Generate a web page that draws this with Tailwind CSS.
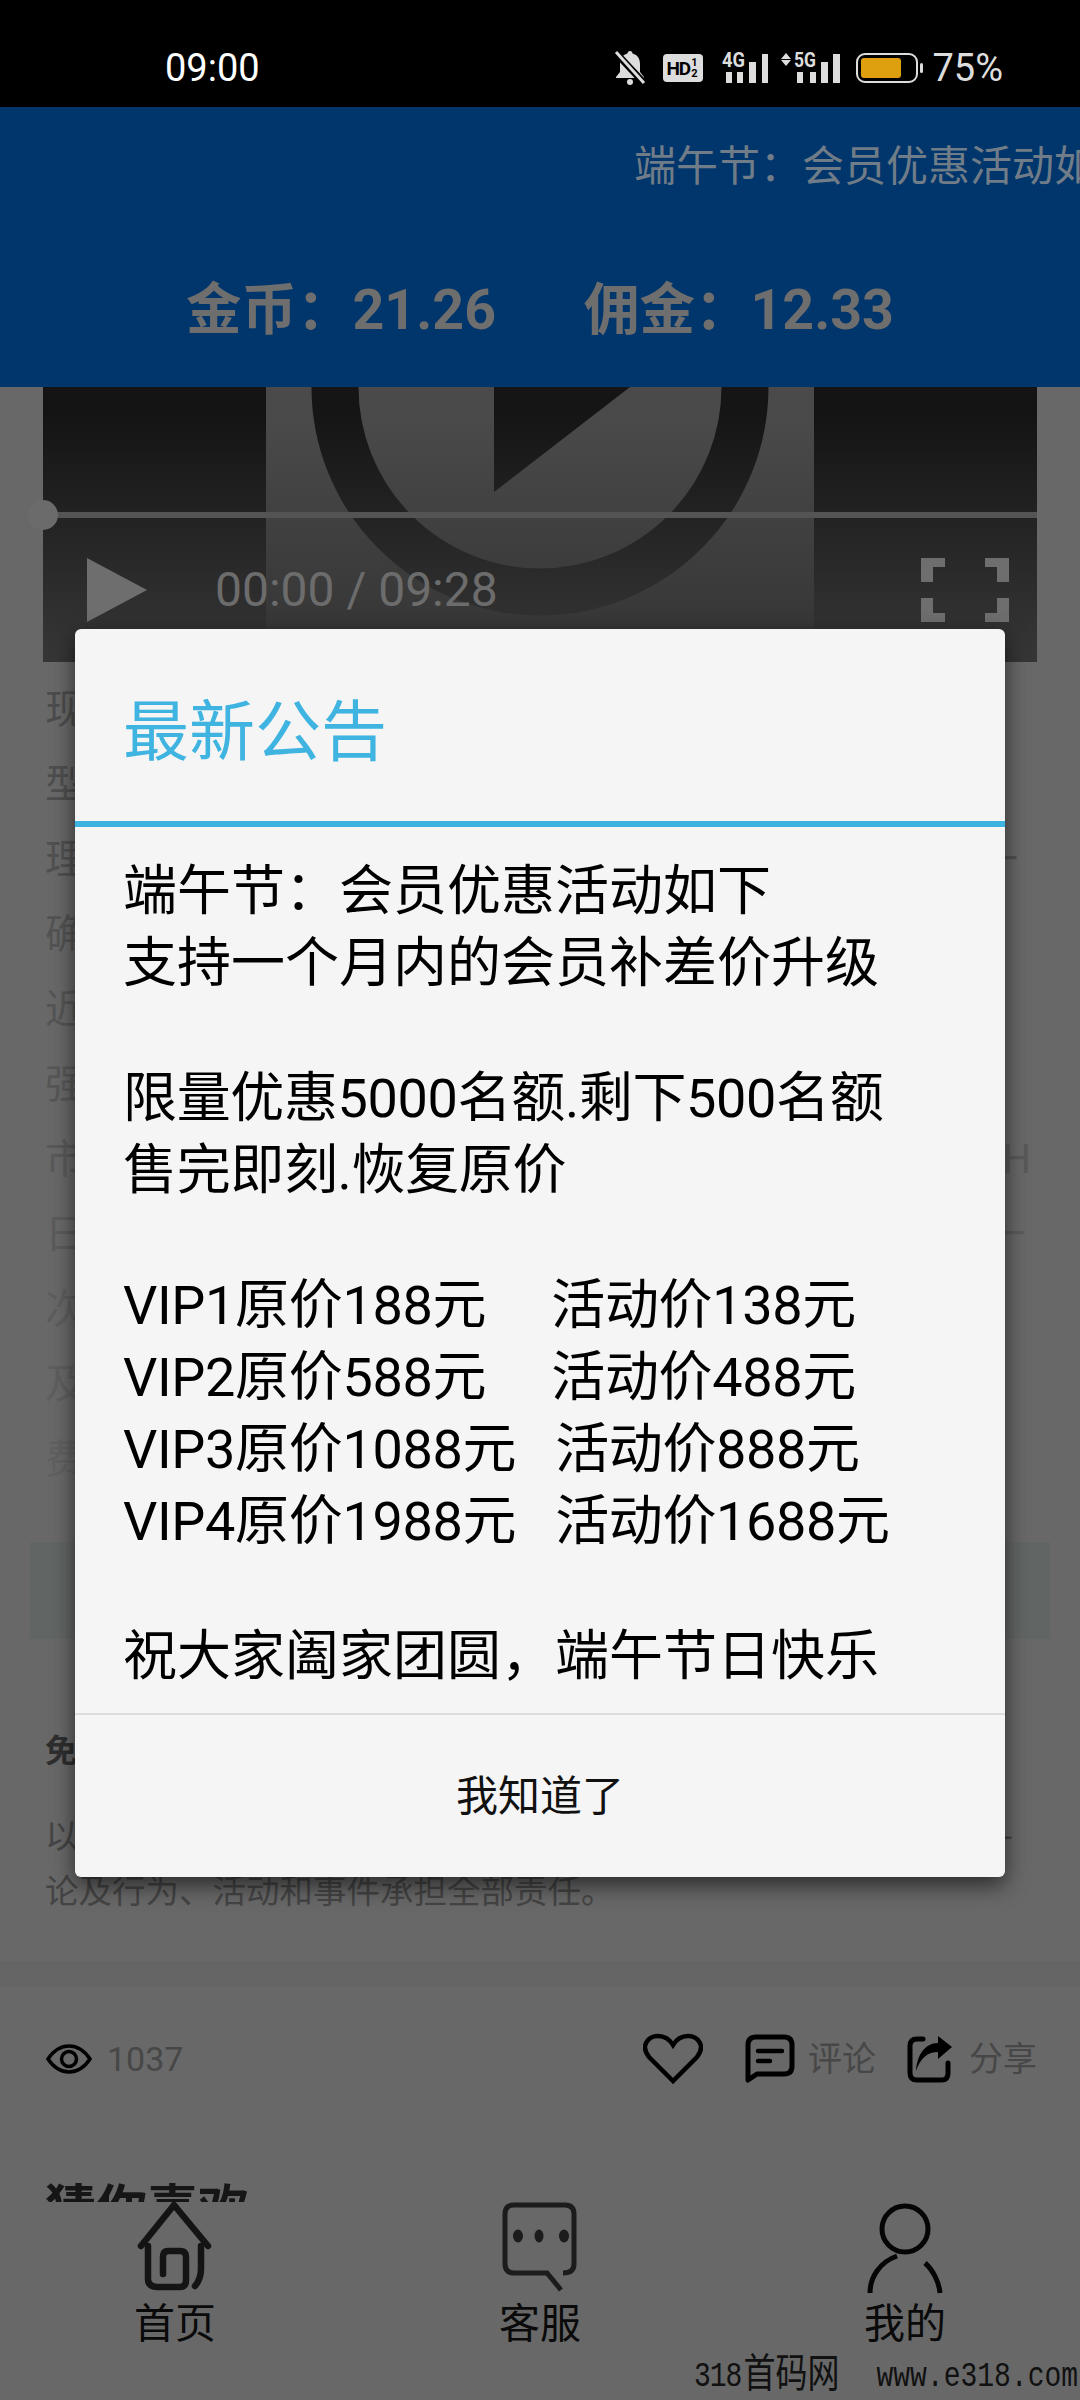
<!DOCTYPE html>
<html lang="zh-CN">
  <head>
    <meta charset="UTF-8" />
    <meta name="viewport" content="width=device-width, initial-scale=1.0" />
    <title>最新公告</title>
    <script src="https://cdn.jsdelivr.net/npm/@tailwindcss/browser@4"></script>
  </head>
  <body class="bg-black">
    <div class="relative flex flex-col w-[1080px] h-[2400px] overflow-hidden bg-[#686868] font-['Roboto','Noto_Sans_CJK_SC',sans-serif]">
      <!-- status bar -->
      <div class="flex items-center h-[107px] shrink-0 bg-black pl-[165px] pr-[77px] pt-[29px]">
        <span class="text-[38px] leading-none text-white">09:00</span>
        <div class="ml-auto flex items-center text-[#dddddd]">
          <svg class="w-[32px] h-[36px]" viewBox="0 0 32 36">
            <path d="M16 1c-1.500 0-2.500 1-2.500 2.500C8 5 6 9 6 14v8l-4 5v1h28v-1l-4-5v-8c0-5-2-9-7.500-10.500C18.500 2 17.500 1 16 1z" fill="#dddddd" />
            <circle cx="16" cy="32" r="3" fill="#dddddd" />
            <path d="M1 2l30 32" stroke="#000000" stroke-width="7" />
            <path d="M2 2l28 31" stroke="#dddddd" stroke-width="3" />
          </svg>
          <div class="ml-[17px] flex items-center h-[28px] w-[40px] rounded-[4px] bg-[#dddddd] pl-[3px] text-black font-bold">
            <span class="text-[19px] leading-none tracking-[-1px]">HD</span>
            <span class="flex flex-col items-center ml-[1px] text-[11px] leading-[11px]"><span>1</span><span>2</span></span>
          </div>
          <svg class="ml-[19px] w-[46px] h-[32px]" viewBox="0 0 46 32">
            <text x="0" y="15" font-size="20" font-weight="700" fill="#dddddd" textLength="23" lengthAdjust="spacingAndGlyphs">4G</text>
            <rect x="4" y="20" width="6" height="11" fill="#dddddd" />
            <rect x="15" y="20" width="6" height="11" fill="#dddddd" />
            <rect x="27" y="10" width="7" height="21" fill="#dddddd" />
            <rect x="40" y="2" width="6" height="29" fill="#dddddd" />
          </svg>
          <svg class="ml-[13px] w-[59px] h-[32px]" viewBox="0 0 59 32">
            <path d="M5 1l5 6H0zM5 14l5-6H0z" fill="#dddddd" />
            <text x="13" y="15" font-size="20" font-weight="700" fill="#dddddd" textLength="22" lengthAdjust="spacingAndGlyphs">5G</text>
            <rect x="16" y="20" width="6" height="11" fill="#dddddd" />
            <rect x="29" y="20" width="6" height="11" fill="#dddddd" />
            <rect x="40" y="10" width="7" height="21" fill="#dddddd" />
            <rect x="52" y="2" width="7" height="29" fill="#dddddd" />
          </svg>
          <svg class="ml-[16px] w-[68px] h-[30px]" viewBox="0 0 68 30">
            <rect x="1" y="1" width="60" height="28" rx="8" fill="none" stroke="#dddddd" stroke-width="2" />
            <rect x="5" y="5" width="40" height="20" rx="3" fill="#dfa00f" />
            <rect x="64" y="10" width="3" height="10" rx="1.500" fill="#dddddd" />
          </svg>
          <span class="ml-[8px] text-[38px] leading-none">75%</span>
        </div>
      </div>

      <!-- blue header -->
      <div class="h-[280px] shrink-0 bg-[#00366b] overflow-hidden">
        <div class="pl-[634px] pt-[33px] h-[113px] text-[42px] leading-[54px] text-[#707c87] whitespace-nowrap">端午节：会员优惠活动如下</div>
        <div class="flex justify-center gap-[88px] pt-[51px] text-[55.500px] leading-[80px] font-bold text-[#6e6e6e]">
          <span>金币：21.26</span>
          <span>佣金：12.33</span>
        </div>
      </div>

      <!-- page behind the dialog -->
      <div class="h-[1815px] shrink-0 overflow-hidden">
        <div class="relative mx-[43px] h-[275px] bg-[#141414]">
          <svg class="absolute inset-0 w-full h-full" viewBox="0 0 994 275">
            <rect x="223" y="0" width="548" height="275" fill="#4a4a4a" />
            <circle cx="497" cy="0" r="205" fill="none" stroke="#151515" stroke-width="47" />
            <path d="M451 -105L587 0L451 105z" fill="#151515" />
          </svg>
          <div class="absolute inset-0 bg-linear-to-b from-transparent from-[10%] to-[#353535] to-[95%]"></div>
          <div class="absolute left-0 right-0 top-[125px] h-[6px] bg-[#545454]"></div>
          <div class="absolute left-[-15px] top-[113px] w-[30px] h-[30px] rounded-full bg-[#6b6b6b]"></div>
          <div class="absolute left-0 right-0 top-[171px] flex items-center h-[64px] pl-[44px] pr-[28px]">
            <svg class="w-[60px] h-[64px]" viewBox="0 0 60 64"><path d="M0 0L60 32L0 64z" fill="#6e6e6e" /></svg>
            <span class="ml-[68px] text-[48px] leading-none text-[#6c6c6c]">00:00 / 09:28</span>
            <svg class="ml-auto w-[88px] h-[64px]" viewBox="0 0 88 64">
              <path d="M0 0H24V9H12V24H0zM88 0H64V9H76V24H88zM0 64H24V55H12V40H0zM88 64H64V55H76V40H88z" fill="#6e6e6e" />
            </svg>
          </div>
        </div>

        <div class="mt-[10px] pl-[45px] text-[40px] leading-[75px]">
          <div class="text-[#4c4c4c]">现</div>
          <div class="text-[#4e4e4e]">型</div>
          <div class="flex justify-between pr-[62px] text-[#505050]"><span>理</span><span>一</span></div>
          <div class="text-[#535353]">确</div>
          <div class="text-[#555555]">近</div>
          <div class="text-[#575757]">强</div>
          <div class="flex justify-between pr-[49px] text-[#595959]"><span>市</span><span>H</span></div>
          <div class="flex justify-between pr-[54px] text-[#5b5b5b]"><span>日</span><span>一</span></div>
          <div class="text-[#5d5d5d]">次</div>
          <div class="text-[#5e5e5e]">及</div>
          <div class="text-[#606060]">费</div>
        </div>

        <div class="mt-[45px] mx-[30px] h-[97px] bg-[#616563]"></div>

        <div class="mt-[87px] pl-[45px] text-[32px] leading-[50px] font-bold text-[#2e2e2e]">免</div>
        <div class="mt-[33px] pl-[45px] text-[33.500px] leading-[55px] text-[#444444]">
          <div class="flex justify-between pr-[68px]"><span>以</span><span>-</span></div>
          <div>论及行为、活动和事件承担全部责任。</div>
        </div>

        <div class="mt-[42px] h-[26px] bg-[#656565]"></div>

        <div class="mt-[42px] flex items-center h-[60px] pl-[46px] pr-[43px] text-[34px] text-[#474747]">
          <svg class="w-[46px] h-[30px]" viewBox="0 0 46 30">
            <path d="M2 15C8 6 15 2 23 2s15 4 21 13c-6 9-13 13-21 13S8 24 2 15z" fill="none" stroke="#000000" stroke-width="3.500" />
            <circle cx="23" cy="15" r="7.500" fill="none" stroke="#000000" stroke-width="3.500" />
          </svg>
          <span class="ml-[15px]">1037</span>
          <svg class="ml-auto w-[60px] h-[52px]" viewBox="0 0 60 52">
            <path d="M30 48L6 24C-3 13 5 3 15 3c7 0 12 4 15 9 3-5 8-9 15-9 10 0 18 10 9 21z" fill="none" stroke="#000000" stroke-width="4.500" />
          </svg>
          <svg class="ml-[42px] w-[50px] h-[50px]" viewBox="0 0 50 50">
            <path d="M3 46V11Q3 3 11 3H39Q47 3 47 11V32Q47 40 39 40H12z" fill="none" stroke="#000000" stroke-width="5" stroke-linejoin="round" />
            <path d="M13 17H37M13 27H25" stroke="#000000" stroke-width="4.500" stroke-linecap="round" />
          </svg>
          <span class="ml-[13px]">评论</span>
          <svg class="ml-[31px] w-[46px] h-[48px]" viewBox="0 0 46 48">
            <path d="M16 4H10Q3 4 3 11V38Q3 45 10 45H35Q41 45 41 38V28" fill="none" stroke="#000000" stroke-width="5" stroke-linecap="round" />
            <path d="M31 1L45 12L31 24V17C20 17 13 24 9 36C10 20 18 8 31 8z" fill="#000000" />
          </svg>
          <span class="ml-[16px]">分享</span>
        </div>

        <div class="mt-[91px] pl-[45px] text-[51px] leading-[60px] font-bold text-[#161616]">猜你喜欢</div>
      </div>

      <!-- bottom nav -->
      <div class="flex justify-between h-[198px] shrink-0 px-[130px] text-[41px] leading-[52px] text-[#0a0a0a]">
        <div class="flex flex-col items-center w-[90px]">
          <svg class="w-[80px] h-[90px]" viewBox="0 0 80 90" fill="none" stroke="#141414" stroke-width="6.500" stroke-linecap="round" stroke-linejoin="round">
            <path d="M6 44L39 3L73 44" />
            <path d="M13 44V77Q13 85 23 85H45Q51 85 51 78V55Q51 49 45 49H33Q28 49 28 55V72" />
            <path d="M66 44V67Q66 77 60 84" />
          </svg>
          <span class="mt-[6px]">首页</span>
        </div>
        <div class="flex flex-col items-center w-[90px]">
          <svg class="w-[80px] h-[92px]" viewBox="0 0 80 92" fill="none" stroke="#1c1c1c" stroke-width="5">
            <path d="M63 71Q74 71 74 62V12Q74 3 65 3H14Q5 3 5 12V62Q5 71 14 71H47L61 88" />
            <ellipse cx="18" cy="34" rx="5" ry="6.500" fill="#1c1c1c" stroke="none" />
            <ellipse cx="39" cy="34" rx="4.500" ry="6.500" fill="#1c1c1c" stroke="none" />
            <ellipse cx="64" cy="34" rx="5" ry="6.500" fill="#1c1c1c" stroke="none" />
          </svg>
          <span class="mt-[4px]">客服</span>
        </div>
        <div class="flex flex-col items-center w-[90px]">
          <svg class="w-[90px] h-[92px]" viewBox="0 0 90 92" fill="none" stroke="#050505" stroke-width="5">
            <circle cx="45" cy="27" r="23" />
            <path d="M10 91C10 75 20 60 37 54" />
            <path d="M65 61C73 68 79 80 80 91" />
          </svg>
          <span class="mt-[4px]">我的</span>
        </div>
      </div>

      <!-- notice dialog -->
      <div class="absolute left-[75px] top-[629px] w-[930px] h-[1248px] flex flex-col rounded-[6px] bg-[#f5f5f5] shadow-[0_8px_22px_rgba(0,0,0,0.6)]">
        <div class="flex items-center h-[192px] shrink-0 pl-[48px] pt-[14px] text-[66px] text-[#3fb4e0]">最新公告</div>
        <div class="h-[6px] shrink-0 bg-[#3db4e0]"></div>
        <div class="pt-[29px] pl-[48px] text-[54px] leading-[72px] text-black">
          <div>端午节：会员优惠活动如下</div>
          <div>支持一个月内的会员补差价升级</div>
          <div class="h-[63px]"></div>
          <div class="tracking-[-0.35px]">限量优惠5000名额.剩下500名额</div>
          <div class="tracking-[-0.35px]">售完即刻.恢复原价</div>
          <div class="h-[63px]"></div>
          <div class="whitespace-pre tracking-[-0.35px]">VIP1原价188元     活动价138元</div>
          <div class="whitespace-pre tracking-[-0.35px]">VIP2原价588元     活动价488元</div>
          <div class="whitespace-pre tracking-[-0.35px]">VIP3原价1088元   活动价888元</div>
          <div class="whitespace-pre tracking-[-0.35px]">VIP4原价1988元   活动价1688元</div>
          <div class="h-[63px]"></div>
          <div>祝大家阖家团圆，端午节日快乐</div>
        </div>
        <div class="mt-auto flex items-center justify-center h-[164px] border-t-2 border-[#dcdcdc] text-[42px] text-[#111111]">我知道了</div>
      </div>

      <!-- watermark -->
      <div class="absolute left-[694px] bottom-[4px] flex items-center h-[30px] scale-y-125 origin-bottom text-[28px] leading-none text-[#111111] whitespace-nowrap font-['Liberation_Mono','Noto_Sans_CJK_SC',monospace]">
        <span class="tracking-[-1px]">318</span><span class="text-[32px] ml-[2px]">首码网</span><span class="ml-[37px]">www.e318.com</span>
      </div>
    </div>
  </body>
</html>
